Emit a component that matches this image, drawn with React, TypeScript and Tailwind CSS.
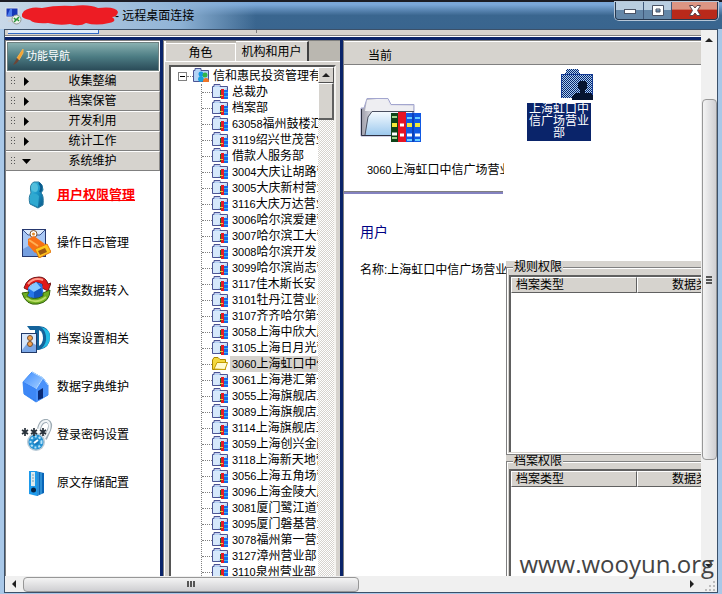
import React from 'react';

const navGroups = ['收集整编', '档案保管', '开发利用', '统计工作', '系统维护'];

const treeItems: [string, string][] = [
  ['', '总裁办'],
  ['', '档案部'],
  ['63058', '福州鼓楼汇'],
  ['3119', '绍兴世茂营业'],
  ['', '借款人服务部'],
  ['3004', '大庆让胡路营'],
  ['3005', '大庆新村营业'],
  ['3116', '大庆万达营业'],
  ['3006', '哈尔滨爱建营'],
  ['3007', '哈尔滨工大营'],
  ['3008', '哈尔滨开发'],
  ['3099', '哈尔滨尚志营'],
  ['3117', '佳木斯长安'],
  ['3101', '牡丹江营业部'],
  ['3107', '齐齐哈尔第一'],
  ['3058', '上海中欣大厦'],
  ['3105', '上海日月光营'],
  ['3060', '上海虹口中信'],
  ['3061', '上海港汇第一'],
  ['3055', '上海旗舰店五'],
  ['3089', '上海旗舰店五'],
  ['3114', '上海旗舰店五'],
  ['3059', '上海创兴金融'],
  ['3118', '上海新天地营'],
  ['3056', '上海五角场营'],
  ['3096', '上海金陵大厦'],
  ['3081', '厦门鹭江道营'],
  ['3095', '厦门磐基营业'],
  ['3078', '福州第一营业'],
  ['3127', '漳州营业部'],
  ['3110', '泉州营业部'],
];

function PersonIcon() {
  return (
    <svg width="30" height="30" viewBox="0 0 30 30" aria-hidden="true">
      <defs>
        <linearGradient id="person" x1="0" y1="0" x2="1" y2="1">
          <stop offset="0" stopColor="#56d2ea" />
          <stop offset="0.5" stopColor="#1a96c8" />
          <stop offset="1" stopColor="#0b5585" />
        </linearGradient>
      </defs>
      <path d="M13 2 L18 2 Q22 4 22 10 L20 13 Q23 15 22 25 L17 28 L9 24 Q7 17 10 13 Q8 4 13 2Z" fill="url(#person)" stroke="#287a9f" />
      <path d="M12 3 Q17 3 17 8 Q17 12 14 12 Q10 11 10 7Z" fill="#52bfdd" />
      <path d="M9 15 Q15 12 18 16 L17 27 L9 23Z" fill="#2fa9d0" />
      <path d="M18 3 Q22 7 19 12" stroke="#0b5a8c" strokeWidth="2" fill="none" />
    </svg>
  );
}

function LogIcon() {
  return (
    <svg width="30" height="30" viewBox="0 0 30 30" aria-hidden="true">
      <rect x="1.5" y="1.5" width="23" height="27" fill="#a9c8f5" stroke="#26386f" />
      <path d="M2 21 L13 15 L24 21 V28 H2Z" fill="#759fe0" />
      <path d="M2 2 L7 7 H19 L24 2" fill="#dbe9fc" stroke="#3a5491" />
      <circle cx="12.500" cy="6" r="3.500" fill="#fff" stroke="#7d5531" />
      <circle cx="12.500" cy="6" r="1.500" fill="#e58b28" />
      <path d="M7 11 L13 8 L24 16 L20 21 L14 25 L7 17Z" fill="#f87116" />
      <path d="M14 21 L26 16 L30 24 L18 30Z" fill="#ffc51c" stroke="#e37610" />
      <path d="M17 23 L24 20 L26 24 L19 27Z" fill="#9e5812" />
      <path d="M8 12 L17 18" stroke="#ffb054" strokeWidth="2" />
    </svg>
  );
}

function ImportIcon() {
  return (
    <svg width="30" height="30" viewBox="0 0 30 30" aria-hidden="true">
      <path d="M3 12 Q6 1 18 1 Q25 1 27 8 L30 7 L27 15 L19 11 L22 9 Q15 3 8 10 L7 14Z" fill="#e11919" stroke="#71191a" />
      <path d="M7 8 Q13 1 22 4" stroke="#ff9a8a" strokeWidth="2" fill="none" />
      <path d="M7 12 L15 6 L21 8 L23 20 L13 24 L7 20Z" fill="#2676e8" />
      <path d="M7 12 L15 6 L20 12 L13 16Z" fill="#86c8ff" />
      <path d="M13 16 L20 12 L22 20 L13 24Z" fill="#1355bd" />
      <path d="M1 17 L8 16 L6 20 Q13 25 22 20 L22 17 L29 14 Q29 26 17 28 Q5 30 1 17Z" fill="#6fae20" stroke="#34640f" />
      <path d="M5 22 Q15 29 25 21" stroke="#b9dc66" strokeWidth="2" fill="none" />
    </svg>
  );
}

function ArchiveSettingsIcon() {
  return (
    <svg width="30" height="30" viewBox="0 0 30 30" aria-hidden="true">
      <path d="M6 2 H18 Q29 3 29 13 Q29 24 18 26 H12 L14 22 V6 H9Z" fill="#14639b" />
      <path d="M18 6 Q22 8 22 14 Q22 19 18 22Z" fill="#fff" />
      <path d="M20 3 Q29 5 29 13 Q29 22 20 25 Q26 20 25 12 Q24 6 20 3Z" fill="#22bce5" />
      <rect x="0.5" y="9.5" width="15" height="19" fill="#d8e7fb" stroke="#223967" strokeWidth="1" />
      <path d="M1 26 L8 17 L15 21 V28 H1Z" fill="#7ba7e6" />
      <circle cx="9" cy="14" r="2.500" fill="#f6a24b" stroke="#745033" />
      <circle cx="9" cy="20" r="2.500" fill="#f6a24b" stroke="#745033" />
    </svg>
  );
}

function HouseIcon() {
  return (
    <svg width="30" height="32" viewBox="0 0 30 32" aria-hidden="true">
      <defs>
        <linearGradient id="roof" x1="0" y1="0" x2="1" y2="1">
          <stop offset="0" stopColor="#3d8cff" />
          <stop offset="1" stopColor="#a6d0ff" />
        </linearGradient>
      </defs>
      <path d="M2 11 L11 1 L22 7 L27 14 V24 L15 31 L3 23Z" fill="#1767e8" stroke="#4690f1" />
      <path d="M2 11 L11 1 L22 7 L15 18Z" fill="url(#roof)" />
      <path d="M2 11 L15 18 V30 L3 23Z" fill="#3d87f6" />
      <path d="M15 18 L22 7 L27 14 V24 L15 31Z" fill="#4a92fb" />
      <path d="M17 20 L22 17 V27 L17 29Z" fill="#092a76" />
      <path d="M11 1 L22 7 L15 18 M22 7 L27 14" stroke="#b5dbff" fill="none" />
    </svg>
  );
}

function PasswordIcon() {
  return (
    <svg width="32" height="32" viewBox="0 0 32 32" aria-hidden="true">
      <path d="M18 10 Q20 1 26 2 Q31 4 28 11 L24 20" stroke="#9eacb5" strokeWidth="4" fill="none" />
      <path d="M18 10 Q20 1 26 2 Q30 4 28 11 L23 20" stroke="#f0f4f6" strokeWidth="2" fill="none" />
      <circle cx="15" cy="23" r="9" fill="#b9cad6" />
      <circle cx="15" cy="23" r="7.500" fill="#2693d3" />
      <circle cx="15" cy="23" r="5.500" fill="none" stroke="#b4e2fa" strokeWidth="2" strokeDasharray="2 2" />
      <circle cx="15" cy="23" r="3" fill="#1a7bbd" />
      <path d="M13 24 L17 21" stroke="#fff" strokeWidth="2" />
      {[4, 13, 22].map((x) => (
        <path key={x} d={`M${x} 9 V17 M${x - 3} 11 L${x + 3} 15 M${x + 3} 11 L${x - 3} 15`} stroke="#27313a" strokeWidth="1.700" />
      ))}
    </svg>
  );
}

function BinderIcon() {
  return (
    <svg width="30" height="30" viewBox="0 0 30 30" aria-hidden="true">
      <path d="M14 3 L23 5 V25 L16 28Z" fill="#0965b8" />
      <path d="M8 3 H16 V28 L8 26Z" fill="#1d9aeb" />
      <path d="M17 4 V27 M20 5 V26" stroke="#51b7ee" />
      <path d="M10 4 H14 V18 H10Z" fill="#dce9ed" />
      <path d="M11 7 H13 M11 10 H13 M11 13 H13" stroke="#7ca2b3" />
      <circle cx="12.500" cy="22" r="2.500" fill="#042447" />
    </svg>
  );
}

const navItems: [string, React.ReactNode][] = [
  ['用户权限管理', <PersonIcon />],
  ['操作日志管理', <LogIcon />],
  ['档案数据转入', <ImportIcon />],
  ['档案设置相关', <ArchiveSettingsIcon />],
  ['数据字典维护', <HouseIcon />],
  ['登录密码设置', <PasswordIcon />],
  ['原文存储配置', <BinderIcon />],
];

function TreeFolder({ open = false }: { open?: boolean }) {
  if (open) {
    return (
      <svg width="16" height="16" viewBox="0 0 16 16" className="shrink-0" aria-hidden="true">
        <path d="M0.500 13.500 V4 L2 1.500 H6 L8 3.500 H13.500 V13.500Z" fill="#f3d83d" stroke="#a88500" />
        <path d="M2 13 L5 6.500 H15.500 L13 13.500Z" fill="#fffbd0" stroke="#c49d00" />
      </svg>
    );
  }
  return (
    <svg width="16" height="16" viewBox="0 0 16 16" className="shrink-0" aria-hidden="true">
      <path d="M0.500 13.500 V2.500 H2 V0.500 H8 V2.500 H15.500 V13.500Z" fill="#b4d3f5" stroke="#4b5495" />
      <path d="M1 3 H15 L6 13 H1Z" fill="#d6e8fb" />
      <path d="M3 1.500 H8" stroke="#c7cdee" />
      <path d="M8 6 H9 V14 H8Z" fill="#127038" />
      <path d="M9 5 H12 V15 H9Z" fill="#e51c23" />
      <path d="M12 6 H16 V15 H12Z" fill="#1769eb" />
      <path d="M12 8.500 H16 M12 12.500 H16" stroke="#45b8e8" />
      <path d="M8 11.500 H11" stroke="#f0cc43" />
    </svg>
  );
}

function RootFolder() {
  return (
    <svg width="16" height="16" viewBox="0 0 16 16" className="shrink-0" aria-hidden="true">
      <path d="M0.500 13.500 V2.500 H2 V0.500 H8 V2.500 H15.500 V13.500Z" fill="#b4d3f5" stroke="#4b5495" />
      <circle cx="8" cy="6" r="2.500" fill="#1498e7" />
      <circle cx="12" cy="7" r="2.500" fill="#31b54a" />
      <path d="M5 12 Q5 8 8 8 Q11 8 11 13 L7 14Z" fill="#1aa0dc" />
      <path d="M10 14 Q10 10 13 10 Q16 10 16 14Z" fill="#f07526" />
    </svg>
  );
}

function BigFolder() {
  return (
    <svg width="62" height="46" viewBox="0 0 62 46" className="block" aria-hidden="true">
      <defs>
        <linearGradient id="flap" x1="0" y1="0" x2="0" y2="1">
          <stop offset="0" stopColor="#f6fbff" />
          <stop offset="1" stopColor="#9dc9ee" />
        </linearGradient>
        <linearGradient id="back" x1="0" y1="0" x2="1" y2="0">
          <stop offset="0" stopColor="#9b9ba8" />
          <stop offset="0.300" stopColor="#f1f1f6" />
          <stop offset="1" stopColor="#d5d5e2" />
        </linearGradient>
      </defs>
      <path d="M1 39 V11 H4 L7 1.500 H28 L31 7.500 H54 V39Z" fill="url(#back)" stroke="#a3a6cf" />
      <path d="M7 3 H27 L30 9 H53 V14 H5Z" fill="#eeeef2" />
      <path d="M5 38 L8 20 L12 14.500 H54 V38Z" fill="url(#flap)" />
      <path d="M5 38 L8 20 L12 14.500 H54" fill="none" stroke="#4a4f60" />
      <path d="M1.500 12 V38.500 H31" fill="none" stroke="#2d3142" />
      <path d="M31 16 H38 V45 H31Z" fill="#0f4319" />
      <path d="M38 15 H46 V45 H38Z" fill="#e51424" />
      <path d="M46 16 H61 V45 H46Z" fill="#1159e3" />
      <path d="M53 15 V45" stroke="#0a2c91" />
      <path d="M32 20 H37 M32 41 H37" stroke="#a1d58b" strokeWidth="2" />
      <path d="M32 28 H37 M47 28 H52 M55 28 H60" stroke="#f4e938" strokeWidth="4" />
      <path d="M40 28 H44 M40 38 H44 M47 38 H52 M55 38 H60 M32 37 H37" stroke="#fff" strokeWidth="3" />
      <path d="M47 21 H52 M55 21 H60 M47 43 H52 M55 43 H60" stroke="#68ceff" strokeWidth="2" />
    </svg>
  );
}

function SelectedFolder() {
  return (
    <svg width="32" height="32" viewBox="0 0 32 32" className="block" aria-hidden="true">
      <defs>
        <pattern id="dither" width="2" height="2" patternUnits="userSpaceOnUse">
          <rect width="1" height="1" fill="#0a246a" />
          <rect x="1" y="1" width="1" height="1" fill="#0a246a" />
        </pattern>
      </defs>
      <g shapeRendering="crispEdges">
        <path d="M0 29 V5 H4 L6 0 H17 L19 5 H32 V29Z" fill="#a5cdf3" />
        <path d="M0 29 V5 H4 L6 0 H17 L19 5 H32 V29Z" fill="url(#dither)" />
        <path d="M0.500 5.500 H31.500 V29 M0.500 5 V29" fill="none" stroke="#143a94" />
        <path d="M11 31 V27 L15 24 H19 V21 L17 18 V14 L20 12 H24 L26 14 V19 L24 21 V24 H29 L32 27 V31Z" fill="#06142f" />
      </g>
    </svg>
  );
}

function Arrow({ dir }: { dir: 'up' | 'down' | 'left' | 'right' }) {
  const shapes = {
    up: 'M4 0 L8 4 H0Z',
    down: 'M0 0 H8 L4 4Z',
    left: 'M4 0 V8 L0 4Z',
    right: 'M0 0 L4 4 L0 8Z',
  };
  const tall = dir === 'left' || dir === 'right';
  return (
    <svg width={tall ? 4 : 8} height={tall ? 8 : 4} viewBox={tall ? '0 0 4 8' : '0 0 8 4'} aria-hidden="true">
      <path d={shapes[dir]} fill="#202020" />
    </svg>
  );
}

function TitleBar() {
  return (
    <header className="flex h-[29px] shrink-0 items-start justify-between border-t-2 border-[#1c1c24] bg-linear-to-b from-[#7ba7d8] from-10% via-[#3a668f] via-50% to-[#39658f]">
      <div className="flex h-full w-64 items-center bg-linear-to-r from-[#c9d9e8] via-[#8fb3d6] via-70% to-transparent pl-1 text-[12px]">
        <svg width="18" height="18" viewBox="0 0 18 18" className="shrink-0" aria-hidden="true">
          <rect x="2" y="1" width="12" height="9" fill="#1637b8" stroke="#dde2e8" />
          <path d="M6 2 H8 V9 H3Z" fill="#4a7cec" />
          <path d="M4 14 H9 V11 H7" stroke="#cfd4d8" strokeWidth="2" fill="none" />
          <circle cx="12.500" cy="12.500" r="4.500" fill="#eef2ec" stroke="#8d9690" />
          <path d="M10 11 L12 13 L10 15 M15 10 L13 12 L15 14" stroke="#249335" strokeWidth="1.500" fill="none" />
        </svg>
        <svg width="97" height="22" viewBox="0 0 97 22" className="shrink-0" aria-hidden="true">
          <path d="M2 6 Q9 1 20 3 Q34 0 51 1 Q67 -1 76 3 Q94 1 96 7 Q95 12 90 12 Q96 16 87 18 Q74 21 64 18 Q58 22 48 19 Q38 21 26 18 Q12 19 8 15 Q-2 13 0 9Z" fill="#ed1c24" />
        </svg>
        <h1 className="-ml-1 whitespace-nowrap">- 远程桌面连接</h1>
      </div>
      <div className="mr-1 flex h-[18px] w-[103px] shrink-0 overflow-hidden rounded-b border border-t-0 border-[#26384f] shadow-[0_0_0_1px_#b7c7d8]">
        <button aria-label="最小化" className="flex w-7 items-center justify-center border-r border-[#40587a] bg-linear-to-b from-[#b9cde0] from-45% to-[#6487a8] to-50%">
          <svg width="12" height="6" viewBox="0 0 12 6"><rect x="0.500" y="1.500" width="11" height="4" fill="#fff" stroke="#4b5365" /></svg>
        </button>
        <button aria-label="最大化" className="flex w-7 items-center justify-center border-r border-[#40587a] bg-linear-to-b from-[#b9cde0] from-45% to-[#6487a8] to-50%">
          <svg width="12" height="11" viewBox="0 0 12 11"><path d="M0.500 0.500 H11.500 V10.500 H0.500Z M4 4 V7 H8 V4Z" fill="#fff" stroke="#4b5365" fillRule="evenodd" /></svg>
        </button>
        <button aria-label="关闭" className="flex flex-1 items-center justify-center bg-linear-to-b from-[#dc9583] from-40% to-[#b9291a] to-50%">
          <svg width="12" height="11" viewBox="0 0 12 11"><path d="M0.500 0.500 H4 L6 3 L8 0.500 H11.500 L8.500 5.500 L11.500 10.500 H8 L6 8 L4 10.500 H0.500 L3.500 5.500Z" fill="#fff" stroke="#59434b" /></svg>
        </button>
      </div>
    </header>
  );
}

function NavPane() {
  return (
    <nav className="flex w-[155px] shrink-0 flex-col border-t border-l border-[#808080] bg-white">
      <h2 className="mt-px mr-px ml-px flex h-[29px] shrink-0 items-center gap-0.5 border border-[#6e8080] bg-linear-to-b from-[#89b0b0] via-[#4d7d84] to-[#2b4c59] pl-1 text-[11px] text-white">
        <svg width="12" height="18" viewBox="0 0 12 18" aria-hidden="true">
          <path d="M11 1 L5 10 L7 12 L11 5Z" fill="#f7a229" stroke="#f0b050" />
          <path d="M5 10 L7 12 Q5 16 1 17Z" fill="#6d4637" />
        </svg>
        功能导航
      </h2>
      <div className="flex flex-col">
        {navGroups.map((label, i) => (
          <button key={label} className="flex h-5 shrink-0 items-center border-t border-r border-b border-t-white border-r-[#8b8987] border-b-[#808080] bg-[#d6d3ce] pl-1 text-[12px]">
            <span className="h-2.5 w-1.5 bg-[radial-gradient(circle,#555_35%,transparent_40%)] bg-[length:3px_3px]" />
            <span className="flex w-5 justify-center">{i === 4
              ? <svg width="9" height="5" viewBox="0 0 9 5"><path d="M0 0 H9 L4.500 5Z" /></svg>
              : <svg width="5" height="9" viewBox="0 0 5 9"><path d="M0 0 V9 L5 4.500Z" /></svg>}
            </span>
            <span className="flex-1 text-center">{label}</span>
            <span className="w-2.5" />
          </button>
        ))}
      </div>
      <ul>
        {navItems.map(([label, icon], i) => (
          <li key={label}>
            <a href="#" className="flex h-12 items-center pl-[15px]">
              <span className="flex w-9 items-center">{icon}</span>
              <span className={i === 0 ? 'text-[13px] font-bold text-[#ff0000] underline' : 'text-[12px]'}>{label}</span>
            </a>
          </li>
        ))}
      </ul>
    </nav>
  );
}

function TreePane() {
  return (
    <section className="flex w-[177px] shrink-0 flex-col border-t border-l border-t-[#808080] border-l-[#808080] bg-[#d6d3ce]">
      <div role="tablist" className="flex h-5 shrink-0 border-l-2 border-white bg-[#bab7b0] text-[12px]">
        <button role="tab" aria-selected="false" className="mt-0.5 w-[70px] border-t border-r border-white bg-[#d6d3ce]">角色</button>
        <button role="tab" aria-selected="true" className="w-[73px] border-t border-r-2 border-t-white border-r-[#404040] bg-[#d6d3ce]">机构和用户</button>
      </div>
      <div className="flex min-h-0 flex-1 border-t border-l border-white pt-[3px] pr-1 pl-1">
        <div className="flex min-w-0 flex-1 border-t-2 border-r-2 border-l-2 border-t-[#555] border-r-[#f4f3f0] border-l-[#555] bg-white">
          <ul role="tree" className="min-w-0 flex-1 overflow-hidden pt-px pl-[7px] text-[12px] leading-4 whitespace-nowrap">
            <li role="treeitem" aria-expanded="true">
              <div className="flex h-4 items-center">
                <button aria-label="折叠" className="flex size-[9px] shrink-0 items-center justify-center border border-[#808080]">
                  <span className="h-px w-[5px] bg-black" />
                </button>
                <span className="w-1.5 shrink-0 border-t border-dotted border-[#808080]" />
                <RootFolder />
                <span className="pl-1">信和惠民投资管理有</span>
              </div>
              <ul role="group" className="ml-[23px] border-l border-dotted border-[#808080]">
                {treeItems.map(([code, name]) => (
                  <li role="treeitem" key={code + name} className="flex h-4 items-center">
                    <span className="w-2.5 shrink-0 border-t border-dotted border-[#808080]" />
                    <TreeFolder open={code === '3060'} />
                    <span className={code === '3060' ? 'ml-0.5 flex bg-[#d6d3ce] pl-0.5' : 'ml-0.5 flex pl-0.5'}>
                      {code && <span className="text-[11px]">{code}</span>}
                      <span>{name}</span>
                    </span>
                  </li>
                ))}
              </ul>
            </li>
          </ul>
          <div className="flex w-4 shrink-0 flex-col bg-[repeating-conic-gradient(#fff_0_25%,#d6d3ce_0_50%)] bg-[length:2px_2px]">
            <button aria-label="向上" className="flex h-4 shrink-0 items-center justify-center border border-t-white border-r-[#505050] border-b-[#505050] border-l-white bg-[#d6d3ce]"><Arrow dir="up" /></button>
            <div className="h-[37px] shrink-0 border border-r-2 border-b-2 border-t-white border-r-[#606060] border-b-[#606060] border-l-white bg-[#d6d3ce]" />
          </div>
        </div>
      </div>
    </section>
  );
}

function PermissionGroup({ title, grow }: { title: string; grow?: boolean }) {
  return (
    <div className={grow ? 'min-h-0 flex-1 overflow-hidden bg-[#d6d3ce]' : 'h-[194px] shrink-0 bg-[#d6d3ce]'}>
      <fieldset
        className={
          grow
            ? 'h-full border border-r-0 border-b-0 border-[#808080] pt-0.5 pl-0.5 shadow-[inset_1px_1px_0_#fff]'
            : 'h-full border border-r-0 border-[#808080] pt-0.5 pb-0.5 pl-0.5 shadow-[inset_1px_1px_0_#fff,inset_0_-1px_0_#fff]'
        }
      >
        <legend className="ml-1 bg-[#d6d3ce] px-px text-[12px] leading-3">{title}</legend>
        <div className="h-full border-t-2 border-l-2 border-[#606060] bg-white">
          <table className="w-full table-fixed border-separate border-spacing-0 text-[12px] leading-3">
            <thead>
              <tr className="bg-[#d6d3ce] text-left">
                <th className="h-4 w-[126px] border-t border-r border-b border-l border-t-white border-r-[#606060] border-b-[#606060] border-l-white p-0 pl-1 font-normal">档案类型</th>
                <th className="h-4 overflow-hidden border-t border-b border-l border-t-white border-b-[#606060] border-l-white p-0 pl-[34px] font-normal whitespace-nowrap">数据类型</th>
              </tr>
            </thead>
          </table>
        </div>
      </fieldset>
    </div>
  );
}

function DetailPane() {
  return (
    <main className="flex min-w-0 flex-1 flex-col border-t border-l border-[#808080] bg-white text-[12px]">
      <h2 className="flex h-6 shrink-0 items-center border-t border-b border-t-white border-b-[#808080] bg-[#d6d3ce] pt-1.5 pl-6">当前</h2>
      <div className="flex min-h-0 flex-1">
        <div className="w-[162px] shrink-0 overflow-hidden whitespace-nowrap">
          <div className="px-4 pt-8"><BigFolder /></div>
          <div className="mr-0.5 flex h-12 items-center overflow-hidden pt-1.5 pl-[23px] leading-4">
            <span className="text-[11px]">3060</span>
            <span>上海虹口中信广场营业部</span>
          </div>
          <div className="mr-[3px] h-[3px] border-t border-[#808080] bg-[#8482c0]" />
          <h3 className="mt-7 pl-4 text-[14px] leading-5 text-[#000084]">用户</h3>
          <p className="mt-5 pl-4 leading-4">名称:上海虹口中信广场营业部</p>
        </div>
        <div className="flex min-w-0 flex-1 flex-col overflow-hidden">
          <div className="h-[196px] shrink-0 pt-1 pl-[21px]">
            <button className="flex w-[66px] flex-col items-end">
              <SelectedFolder />
              <span className="mt-0.5 mr-0.5 h-[38px] w-16 bg-[#0a246a] px-0.5 text-center leading-3 text-white">上海虹口中信广场营业部</span>
            </button>
          </div>
          <PermissionGroup title="规则权限" />
          <PermissionGroup title="档案权限" grow />
        </div>
      </div>
    </main>
  );
}

export default function App() {
  return (
    <div className="relative flex h-screen flex-col overflow-hidden bg-[#a9c8e8] font-['Liberation_Sans','Noto_Sans_CJK_SC',sans-serif] text-black">
      <TitleBar />
      <div className="mr-1 mb-px ml-1 flex min-h-0 flex-1 flex-col border border-[#3b5069]">
        <div className="flex min-h-0 flex-1">
          <div className="flex min-w-0 flex-1 flex-col">
            <div className="flex h-[7px] shrink-0 border-b border-white bg-[#d6d3ce] shadow-[inset_0_-1px_0_#808080]">
              <div className="ml-[3px] h-1 w-[91px] border-r border-b border-[#316ac5] bg-[#e2edfb]" />
              <div className="ml-[157px] h-[3px] w-px bg-[#808080]" />
            </div>
            <div className="flex min-h-0 flex-1 gap-[3px] bg-[#0a246a] pt-[3px]">
              <NavPane />
              <TreePane />
              <DetailPane />
            </div>
          </div>
          <div className="flex w-4 shrink-0 flex-col items-center bg-[#f0f0f0] py-1">
            <button aria-label="向上滚动" className="flex h-3 w-full shrink-0 items-center justify-center"><Arrow dir="up" /></button>
            <div className="mt-[53px] mb-auto flex h-[361px] w-[15px] shrink-0 flex-col items-center justify-center gap-px rounded-sm border border-[#979797] bg-linear-to-r from-[#f4f4f4] to-[#cfcfd2]">
              <span className="h-0.5 w-1.5 bg-[#555]" />
              <span className="h-0.5 w-1.5 bg-[#555]" />
              <span className="h-0.5 w-1.5 bg-[#555]" />
            </div>
            <button aria-label="向下滚动" className="flex h-3 w-full shrink-0 items-center justify-center"><Arrow dir="down" /></button>
          </div>
        </div>
        <div className="flex h-4 shrink-0 items-center bg-[#f0f0f0]">
          <button aria-label="向左滚动" className="flex h-full w-[18px] items-center justify-center"><Arrow dir="left" /></button>
          <div className="flex h-[15px] w-[336px] items-center justify-center gap-px rounded-sm border border-[#979797] bg-linear-to-b from-[#f4f4f4] to-[#cfcfd2]">
            <span className="h-1.5 w-0.5 bg-[#555]" />
            <span className="h-1.5 w-0.5 bg-[#555]" />
            <span className="h-1.5 w-0.5 bg-[#555]" />
          </div>
          <button aria-label="向右滚动" className="ml-auto flex h-full w-[18px] items-center justify-center"><Arrow dir="right" /></button>
          <svg width="16" height="16" viewBox="0 0 16 16" aria-hidden="true">
            <path d="M12 5 h2 v2 h-2Z M12 9 h2 v2 h-2Z M8 9 h2 v2 h-2Z M12 13 h2 v2 h-2Z M8 13 h2 v2 h-2Z M4 13 h2 v2 h-2Z" fill="#bdbdbd" />
          </svg>
        </div>
      </div>
      <p className="absolute right-2 bottom-3.5 font-['Open_Sans',sans-serif] text-[24px] leading-8 text-[#444]">www.wooyun.org</p>
    </div>
  );
}
